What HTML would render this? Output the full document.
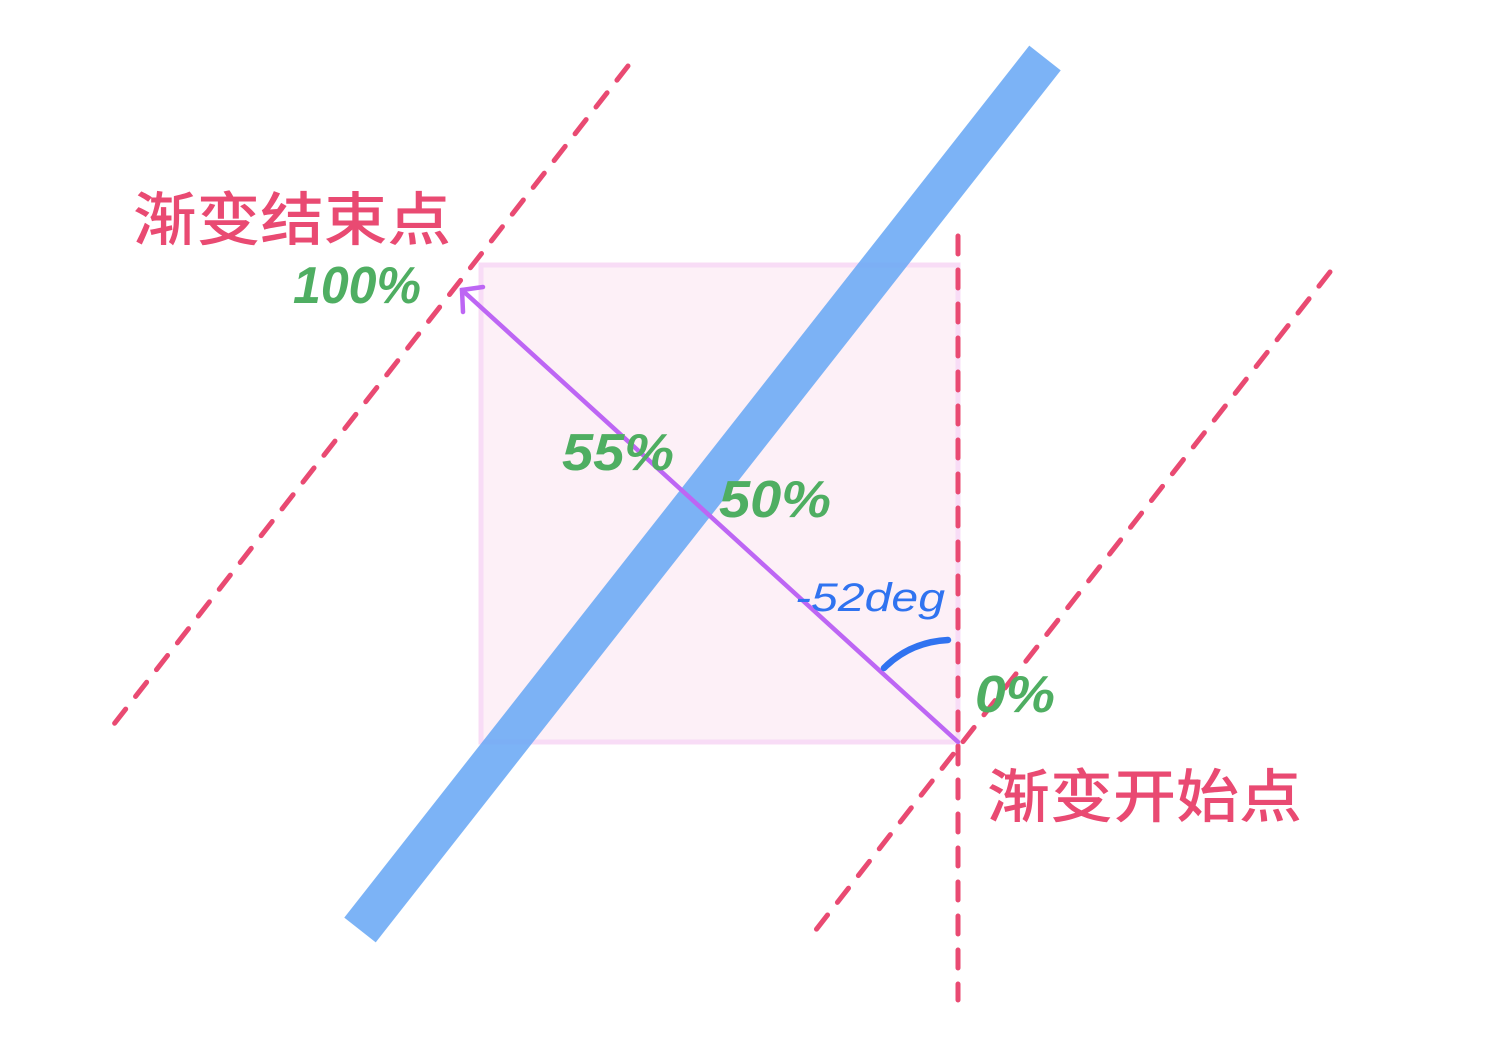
<!DOCTYPE html>
<html><head><meta charset="utf-8"><style>
html,body{margin:0;padding:0;background:#fff;width:1490px;height:1052px;overflow:hidden}
svg{display:block}
text{font-family:"Liberation Sans","Noto Sans CJK SC",sans-serif}
</style></head><body>
<svg width="1490" height="1052" viewBox="0 0 1490 1052" xmlns="http://www.w3.org/2000/svg">
<rect x="481" y="265" width="477" height="477" fill="#fdf0f7" stroke="#f8dcf6" stroke-width="5"/>
<line x1="360" y1="930" x2="1045" y2="58" stroke="#6aa8f5" stroke-opacity="0.88" stroke-width="40"/>
<g stroke="#e94a72" stroke-width="5" stroke-linecap="round" stroke-dasharray="18 16" fill="none">
<line x1="628" y1="66" x2="107" y2="733"/>
<line x1="1330" y1="272" x2="808" y2="940"/>
<line x1="958" y1="236" x2="958" y2="1000"/>
</g>
<g stroke="#bd66f4" stroke-width="4.5" stroke-linecap="round" fill="none">
<line x1="958" y1="742" x2="462" y2="290"/>
<polyline points="483,287 462,290 463,312"/>
</g>
<path d="M884,668 Q910,642 948,640" stroke="#3073f0" stroke-width="6.5" fill="none" stroke-linecap="round"/>
<g fill="#e94a72" font-size="58" font-weight="500">
<text x="133" y="240" textLength="318" lengthAdjust="spacingAndGlyphs">渐变结束点</text>
<text x="987" y="817" textLength="315" lengthAdjust="spacingAndGlyphs">渐变开始点</text>
</g>
<g fill="#4fae62" font-size="52" font-style="italic" font-weight="600">
<text x="293" y="303" textLength="128" lengthAdjust="spacingAndGlyphs">100%</text>
<text x="562" y="470" textLength="112" lengthAdjust="spacingAndGlyphs">55%</text>
<text x="719" y="517" textLength="112" lengthAdjust="spacingAndGlyphs">50%</text>
<text x="975" y="712" textLength="80" lengthAdjust="spacingAndGlyphs">0%</text>
</g>
<text x="795" y="611" fill="#3073f0" font-size="40" font-style="italic" textLength="150" lengthAdjust="spacingAndGlyphs">-52deg</text>
</svg>
</body></html>
